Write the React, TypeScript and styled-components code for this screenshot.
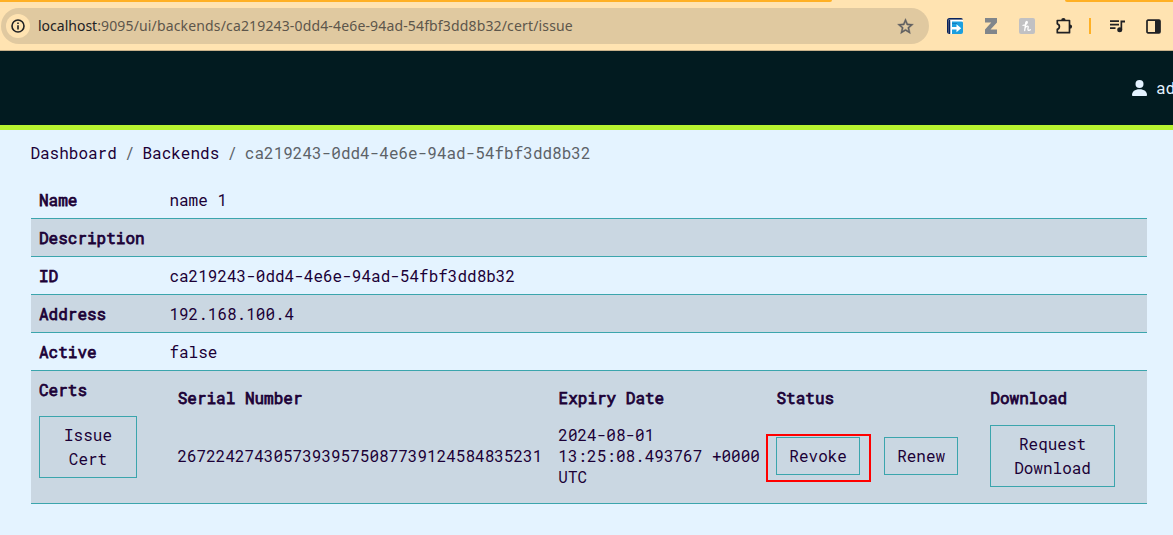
import React from 'react';
import styled, { createGlobalStyle } from 'styled-components';
import { MdStarOutline } from 'react-icons/md';

const mono = '"Roboto Mono", "Liberation Mono", monospace';

const GlobalStyle = createGlobalStyle`
  *, *::before, *::after { box-sizing: border-box; }
  body {
    margin: 0;
    min-height: 100vh;
    overflow: hidden;
    background: #e4f3ff;
    color: #1b0036;
    font: 16px/24px ${mono};
  }
  a { color: inherit; text-decoration: none; }
`;

const TabStrip = styled.div`
  display: flex;
  justify-content: space-between;
  height: 2px;
  background: #ffe3b1;
`;

const TabEdge = styled.div<{ $width: number; $side: 'left' | 'right' }>`
  width: ${(p) => p.$width}px;
  background: #ffb024;
  border-radius: ${(p) => (p.$side === 'left' ? '0 0 6px 0' : '0 0 0 6px')};
`;

const Toolbar = styled.div`
  display: flex;
  align-items: center;
  height: 49px;
  padding-left: 1px;
  background: #ffe3b1;
  border-bottom: 1px solid #c8b28b;
`;

const AddressBar = styled.div`
  display: flex;
  align-items: center;
  width: 928px;
  height: 36px;
  padding: 0 14px 0 5px;
  border-radius: 18px;
  background: #e0c9a0;
  font: 14px/20px "Noto Sans", sans-serif;
  color: #5d564b;
`;

const SiteInfo = styled.span`
  display: grid;
  place-items: center;
  width: 24px;
  height: 24px;
  margin-right: 8px;
  border-radius: 50%;
  background: #ffe3b1;
`;

const Url = styled.span`
  flex: 1;
  white-space: nowrap;
  letter-spacing: 0.15px;
  b { font-weight: 400; letter-spacing: 0; color: #202124; }
`;

const StarIcon = styled(MdStarOutline)`
  color: #5f5f60;
  stroke: #5f5f60;
  stroke-width: 0.5px;
`;

const Extensions = styled.div`
  display: flex;
  align-items: center;
  margin-left: 18px;
  svg { display: block; flex: none; }
`;

const Slot = styled.span<{ $gap: number }>`
  margin-right: ${(p) => p.$gap}px;
`;

const Divider = styled.span`
  width: 2px;
  height: 16px;
  margin-right: 18px;
  background: #ffb024;
`;

const Header = styled.header`
  display: flex;
  align-items: center;
  height: 79px;
  padding-left: 1132px;
  background: #021b20;
  border-bottom: 5px solid #b7f330;
  color: #e4f3ff;
  white-space: nowrap;
  overflow: hidden;
  svg { flex: none; margin-right: 9px; }
`;

const Page = styled.main`
  padding: 11px 26px 0 31px;
`;

const Breadcrumb = styled.nav`
  display: flex;
  gap: 8px;
  height: 24px;
  margin: 0 0 16px -0.6px;
`;

const Muted = styled.span`
  color: #5c6268;
`;

const Details = styled.dl`
  margin: 0;
  line-height: 21px;
`;

const Row = styled.div<{ $striped?: boolean; $height?: number }>`
  display: grid;
  grid-template-columns: 131px 1fr;
  height: ${(p) => p.$height ?? 38}px;
  background: ${(p) => (p.$striped ? '#cad7e2' : 'transparent')};
  border-bottom: 1px solid #3ba5ad;
`;

const Strong = styled.span`
  -webkit-text-stroke: 0.75px currentColor;
`;

const Label = styled.dt`
  padding: 8px;
`;

const Value = styled.dd`
  margin: 0;
  padding: 8px 8px 8px 7.4px;
`;

const Button = styled.button<{ $width: number }>`
  width: ${(p) => p.$width}px;
  padding: 6px 11px;
  background: transparent;
  border: 1px solid #3ba5ad;
  border-radius: 0;
  color: inherit;
  font: 16px/24px ${mono};
`;

const IssueButton = styled(Button)`
  display: block;
  margin-top: 16px;
`;

const Certs = styled.div`
  display: grid;
  grid-template-columns: 380.9px 217.9px 213.9px 1fr;
  grid-template-rows: 37px 79px;
`;

const Head = styled.div`
  padding: 8px 8px 8px 8.3px;
`;

const Cell = styled.div`
  display: flex;
  align-items: center;
  gap: 24px;
  padding: 8px;
`;

const Expiry = styled.span`
  flex: none;
  width: 202px;
`;

const Highlight = styled.span`
  position: relative;
  display: flex;
  &::after {
    content: '';
    position: absolute;
    inset: -3px -11px -7px -10.5px;
    border: 2px solid #ff0000;
  }
`;

const fields = [
  ['Name', 'name 1'],
  ['Description', ''],
  ['ID', 'ca219243-0dd4-4e6e-94ad-54fbf3dd8b32'],
  ['Address', '192.168.100.4'],
  ['Active', 'false'],
];

const columns = ['Serial Number', 'Expiry Date', 'Status', 'Download'];

const InfoIcon = () => (
  <svg width="16" height="16" viewBox="0 0 16 16">
    <circle cx="8" cy="8" r="6" fill="none" stroke="#202124" strokeWidth="1.600" />
    <path d="M7.200 4.500h1.600v1.600H7.200zM7.200 7.200h1.600v4.300H7.200z" fill="#202124" />
  </svg>
);

const PersonIcon = () => (
  <svg width="15" height="16" viewBox="0 0 15 16">
    <circle cx="7.500" cy="4" r="4" fill="currentColor" />
    <path d="M0 15.200C0 11.500 2.800 9.300 7.500 9.300s7.500 2.200 7.500 5.900c0 .5-.4.800-.8.800H.8c-.4 0-.8-.3-.8-.8z" fill="currentColor" />
  </svg>
);

const ExportIcon = () => (
  <svg width="16" height="16" viewBox="0 0 16 16">
    <rect x="3" y="3" width="13" height="13" rx="2" fill="#1b9fdf" />
    <path d="M1.500 15.800A2 2 0 0 1 0 14V2.500A2.500 2.500 0 0 1 2.500 0H14a2 2 0 0 1 2 1.700H1.500z" fill="#08235e" />
    <path d="M1.700 1.700H16v1.900H5V16H3.200V3.600H1.700z" fill="#fff" />
    <path d="M1.500 1.700h1.700V16H1.500z" fill="#08235e" />
    <path d="M5 5.500h5V6H5z" fill="#0f5a9e" />
    <path d="M4.500 9h5V6.300l4.700 4-4.700 4v-2.800h-5z" fill="#fff" />
  </svg>
);

const ZIcon = () => (
  <svg width="14" height="16" viewBox="0 0 14 16">
    <path d="M1 0h12v4.500L6.500 11.500H13V16H1v-4.500l6.300-7H1z" fill="#81868b" />
  </svg>
);

const HoneyIcon = () => (
  <svg width="16" height="16" viewBox="0 0 16 16">
    <rect width="16" height="16" rx="2" fill="#c1c1c3" />
    <path
      d="M4 7.300c2.500 0 4.300-1.700 4.300-3 0-1.200-1.300-1-1.600.6L5.700 12.500M6.200 10c.8-1.900 3.100-2.600 3-.7l-.3 1.700c-.1 1.700 1.300 1.800 2.500.8"
      fill="none"
      stroke="#fff"
      strokeWidth="1.300"
      strokeLinecap="round"
    />
  </svg>
);

const PuzzleIcon = () => (
  <svg width="18" height="18" viewBox="0 0 18 18">
    <path
      d="M2.300 3.500h12.200v12.200H2.300v-3.300c2.800-.6 2.800-5 0-5.600z"
      fill="none"
      stroke="#202124"
      strokeWidth="1.700"
      strokeLinejoin="round"
    />
    <path d="M6.200 3.200a2.200 2.300 0 0 1 4.400 0zM14.800 7.400a2.300 2.200 0 0 1 0 4.400z" fill="#202124" />
  </svg>
);

const MediaIcon = () => (
  <svg width="17" height="14" viewBox="0 0 17 14">
    <path d="M1 2.200h9M1 5.700h9M1 9.200h5.500" stroke="#202124" strokeWidth="1.700" />
    <circle cx="10.700" cy="10.800" r="2.500" fill="#202124" />
    <path d="M11.500 10.800V1.400H16v2.200h-2.800v7.200z" fill="#202124" />
  </svg>
);

const PanelIcon = () => (
  <svg width="15" height="15" viewBox="0 0 15 15">
    <rect x="1" y="1.200" width="13" height="12.600" rx="1" fill="none" stroke="#202124" strokeWidth="1.700" />
    <path d="M9 1h5v13H9z" fill="#202124" />
  </svg>
);

export default function App() {
  return (
    <>
      <GlobalStyle />
      <TabStrip>
        <TabEdge $width={832} $side="left" />
        <TabEdge $width={108} $side="right" />
      </TabStrip>
      <Toolbar>
        <AddressBar>
          <SiteInfo><InfoIcon /></SiteInfo>
          <Url><b>localhost</b>:9095/ui/backends/ca219243-0dd4-4e6e-94ad-54fbf3dd8b32/cert/issue</Url>
          <StarIcon size={19} />
        </AddressBar>
        <Extensions>
          <Slot $gap={21}><ExportIcon /></Slot>
          <Slot $gap={21}><ZIcon /></Slot>
          <Slot $gap={20}><HoneyIcon /></Slot>
          <Slot $gap={16}><PuzzleIcon /></Slot>
          <Divider />
          <Slot $gap={19.5}><MediaIcon /></Slot>
          <PanelIcon />
        </Extensions>
      </Toolbar>
      <Header>
        <PersonIcon />
        <span>admin</span>
      </Header>
      <Page>
        <Breadcrumb>
          <a href="#">Dashboard</a>
          <Muted>/</Muted>
          <a href="#">Backends</a>
          <Muted>/</Muted>
          <Muted>ca219243-0dd4-4e6e-94ad-54fbf3dd8b32</Muted>
        </Breadcrumb>
        <Details>
          {fields.map(([label, value], i) => (
            <Row key={label} $striped={i % 2 === 1}>
              <Label><Strong>{label}</Strong></Label>
              <Value>{value}</Value>
            </Row>
          ))}
          <Row $striped $height={133}>
            <Label>
              <Strong>Certs</Strong>
              <IssueButton $width={98}>Issue Cert</IssueButton>
            </Label>
            <Value>
              <Certs>
                {columns.map((name) => (
                  <Head key={name}><Strong>{name}</Strong></Head>
                ))}
                <Cell>26722427430573939575087739124584835231</Cell>
                <Cell><Expiry>2024-08-01 13:25:08.493767 +0000 UTC</Expiry></Cell>
                <Cell>
                  <Highlight><Button $width={84}>Revoke</Button></Highlight>
                  <Button $width={74}>Renew</Button>
                </Cell>
                <Cell><Button $width={125}>Request Download</Button></Cell>
              </Certs>
            </Value>
          </Row>
        </Details>
      </Page>
    </>
  );
}
